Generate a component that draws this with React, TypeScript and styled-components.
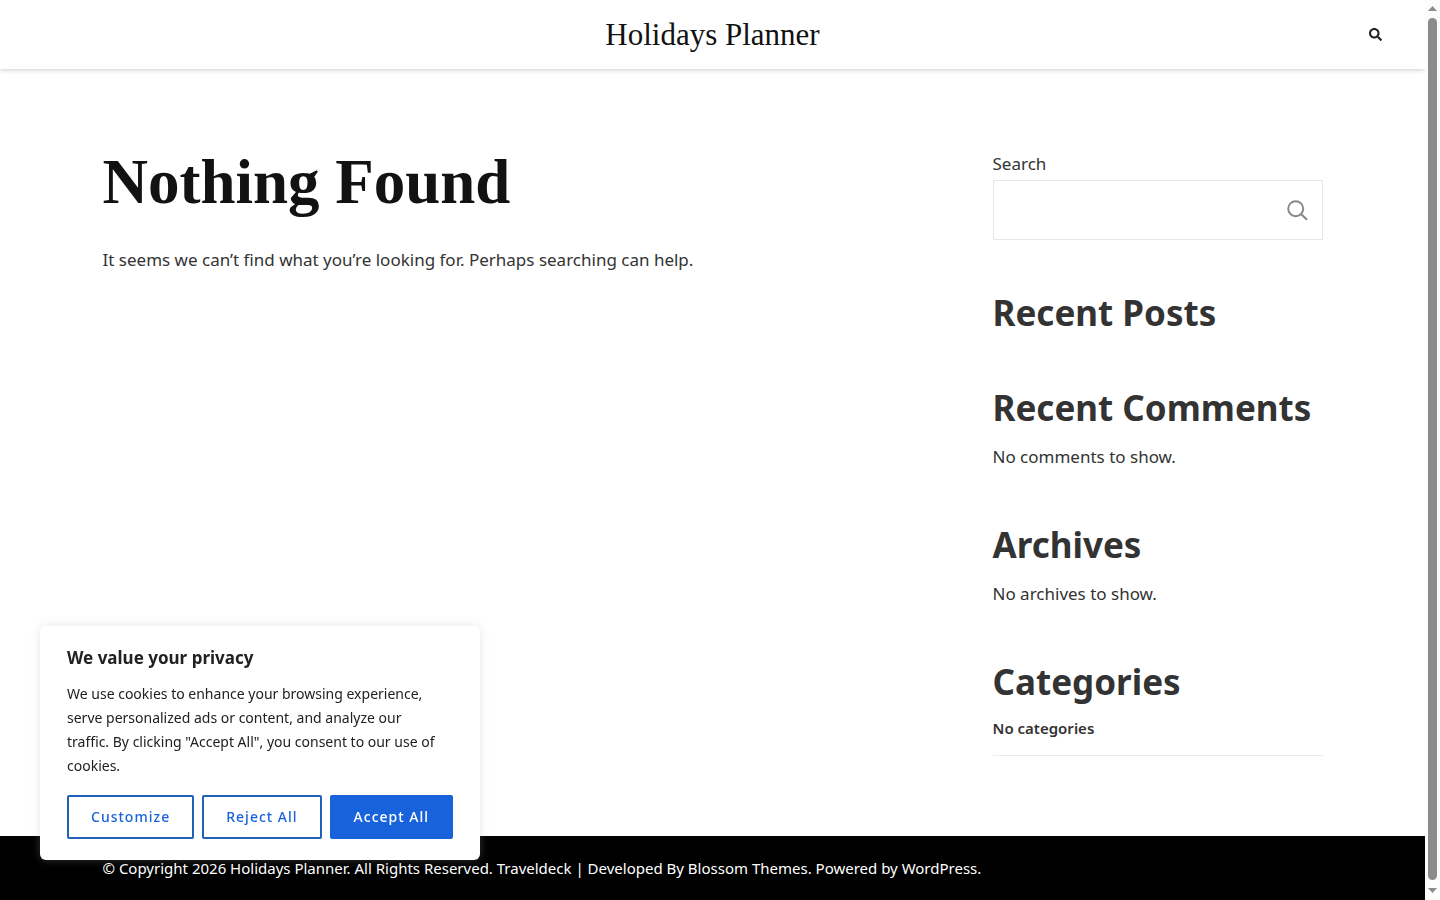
import React from 'react';
import styled, { createGlobalStyle } from 'styled-components';
import { FaSearch } from 'react-icons/fa';

const GlobalStyle = createGlobalStyle`
  *, *::before, *::after { box-sizing: border-box; }
  html { scrollbar-width: none; }
  body {
    margin: 0;
    background: #fff;
    color: #333;
    font-family: "Noto Sans", "Open Sans", sans-serif;
    font-size: 17px;
    line-height: 30px;
  }
  a { color: inherit; text-decoration: none; }
`;

const Shell = styled.div`
  display: grid;
  grid-template-columns: minmax(0, 1fr) 15px;
`;

const Page = styled.div`
  display: flex;
  flex-direction: column;
  min-height: 100vh;
`;

const Header = styled.header`
  display: grid;
  grid-template-columns: 1fr auto 1fr;
  align-items: center;
  height: 69px;
  padding: 0 43px;
  box-shadow: 0 1px 5px rgba(0, 0, 0, 0.2);
`;

const SiteTitle = styled.a`
  grid-column: 2;
  color: #121212;
  font-family: "Liberation Serif", serif;
  font-size: 31px;
  line-height: 40px;
`;

const HeaderSearch = styled.button`
  justify-self: end;
  display: flex;
  padding: 0;
  border: 0;
  background: none;
  color: #222;
  font-size: 13px;
  cursor: pointer;
`;

const Container = styled.div`
  width: 100%;
  max-width: 1220px;
  margin: 0 auto;
`;

const Content = styled(Container)`
  flex: 1;
  display: grid;
  grid-template-columns: minmax(0, 1fr) 330px;
  gap: 60px;
  padding: 80px 0;
`;

const PageTitle = styled.h1`
  margin: 0 0 30px;
  color: #121212;
  font-family: "Liberation Serif", serif;
  font-size: 63px;
  line-height: 66px;
`;

const Text = styled.p`
  margin: 0;
`;

const Sidebar = styled.aside`
  display: flex;
  flex-direction: column;
  gap: 51px;
`;

const SearchForm = styled.form`
  display: flex;
  flex-direction: column;
  gap: 1px;
`;

const SearchBox = styled.div`
  display: flex;
  height: 60px;
  border: 1px solid #e6e6e6;
`;

const SearchInput = styled.input`
  flex: 1;
  min-width: 0;
  padding: 0 15px;
  border: 0;
  outline: 0;
  background: transparent;
  font: inherit;
`;

const SearchSubmit = styled.button`
  display: flex;
  align-items: center;
  padding: 0 14px;
  border: 0;
  background: none;
  color: #888;
  cursor: pointer;
`;

const Widget = styled.section`
  display: flex;
  flex-direction: column;
  gap: 12px;
`;

const WidgetTitle = styled.h2`
  margin: 0;
  font-size: 35px;
  line-height: 44px;
`;

const CategoryList = styled.ul`
  margin: 0;
  padding: 0;
  list-style: none;
  font-size: 15px;
  font-weight: 600;
  line-height: 24px;
`;

const CategoryItem = styled.li`
  padding-bottom: 15px;
  border-bottom: 1px solid #f0e9e9;
`;

const Footer = styled.footer`
  padding: 19px 0;
  background: #000;
  color: #fff;
  font-size: 15px;
  line-height: 26px;
`;

const Consent = styled.section`
  position: fixed;
  left: 40px;
  bottom: 40px;
  width: 440px;
  padding: 18px 27px 21px;
  border-radius: 6px;
  background: #fff;
  color: #212121;
  box-shadow: 0 0 10px rgba(172, 171, 171, 0.3);
`;

const ConsentTitle = styled.h2`
  margin: 0 0 10px;
  font-size: 17px;
  line-height: 28px;
`;

const ConsentText = styled.p`
  margin: 0 0 17px;
  padding-right: 8px;
  font-size: 14px;
  line-height: 24px;
`;

const ConsentActions = styled.div`
  display: flex;
  gap: 8px;
`;

const ConsentButton = styled.button<{ $solid?: boolean }>`
  flex: 1 1 auto;
  height: 44px;
  padding: 0 20px 2px;
  border: 2px solid ${(p) => (p.$solid ? '#1863dc' : '#2062b8')};
  border-radius: 2px;
  background: ${(p) => (p.$solid ? '#1863dc' : 'transparent')};
  color: ${(p) => (p.$solid ? '#fff' : '#1863dc')};
  font-family: inherit;
  font-size: 14px;
  font-weight: 500;
  letter-spacing: 1px;
  white-space: nowrap;
  cursor: pointer;
`;

const ScrollTrack = styled.div`
  position: sticky;
  top: 0;
  display: flex;
  flex-direction: column;
  align-items: center;
  height: 100vh;
  padding: 6px 0 7px;
  background: #fcfcfc;
`;

const ScrollThumb = styled.div`
  flex: 1;
  width: 9px;
  margin: 7px 0 8px;
  border-radius: 5px;
  background: #8b8b8b;
`;

const Arrow = ({ down = false }: { down?: boolean }) => (
  <svg width="9" height="5" viewBox="0 0 9 5" fill="#8b8b8b" aria-hidden="true">
    <path d={down ? 'M0 0h9L4.500 5z' : 'M0 5h9L4.500 0z'} />
  </svg>
);

const SearchGlyph = () => (
  <svg width="21" height="21" viewBox="0 0 21 21" fill="none" stroke="currentColor" strokeWidth="1.900" aria-hidden="true">
    <circle cx="8.700" cy="8.700" r="7.500" />
    <path d="M14 14l6 5.700" strokeWidth="2.200" />
  </svg>
);

export default function App() {
  return (
    <>
      <GlobalStyle />
      <Shell>
        <Page>
          <Header>
            <SiteTitle href="#">Holidays Planner</SiteTitle>
            <HeaderSearch type="button" aria-label="Open search">
              <FaSearch />
            </HeaderSearch>
          </Header>
          <Content>
            <main>
              <PageTitle>Nothing Found</PageTitle>
              <Text>It seems we can’t find what you’re looking for. Perhaps searching can help.</Text>
            </main>
            <Sidebar>
              <SearchForm role="search">
                <label htmlFor="site-search">Search</label>
                <SearchBox>
                  <SearchInput id="site-search" type="search" />
                  <SearchSubmit type="submit" aria-label="Submit search">
                    <SearchGlyph />
                  </SearchSubmit>
                </SearchBox>
              </SearchForm>
              <Widget>
                <WidgetTitle>Recent Posts</WidgetTitle>
              </Widget>
              <Widget>
                <WidgetTitle>Recent Comments</WidgetTitle>
                <Text>No comments to show.</Text>
              </Widget>
              <Widget>
                <WidgetTitle>Archives</WidgetTitle>
                <Text>No archives to show.</Text>
              </Widget>
              <Widget>
                <WidgetTitle>Categories</WidgetTitle>
                <CategoryList>
                  <CategoryItem>No categories</CategoryItem>
                </CategoryList>
              </Widget>
            </Sidebar>
          </Content>
          <Footer>
            <Container>
              © Copyright 2026 <a href="#">Holidays Planner</a>. All Rights Reserved. Traveldeck | Developed By{' '}
              <a href="#">Blossom Themes</a>. Powered by <a href="#">WordPress</a>.
            </Container>
          </Footer>
        </Page>
        <ScrollTrack aria-hidden="true">
          <Arrow />
          <ScrollThumb />
          <Arrow down />
        </ScrollTrack>
      </Shell>
      <Consent aria-label="We value your privacy">
        <ConsentTitle>We value your privacy</ConsentTitle>
        <ConsentText>
          We use cookies to enhance your browsing experience, serve personalized ads or content, and analyze our
          traffic. By clicking "Accept All", you consent to our use of cookies.
        </ConsentText>
        <ConsentActions>
          <ConsentButton type="button">Customize</ConsentButton>
          <ConsentButton type="button">Reject All</ConsentButton>
          <ConsentButton type="button" $solid>
            Accept All
          </ConsentButton>
        </ConsentActions>
      </Consent>
    </>
  );
}
